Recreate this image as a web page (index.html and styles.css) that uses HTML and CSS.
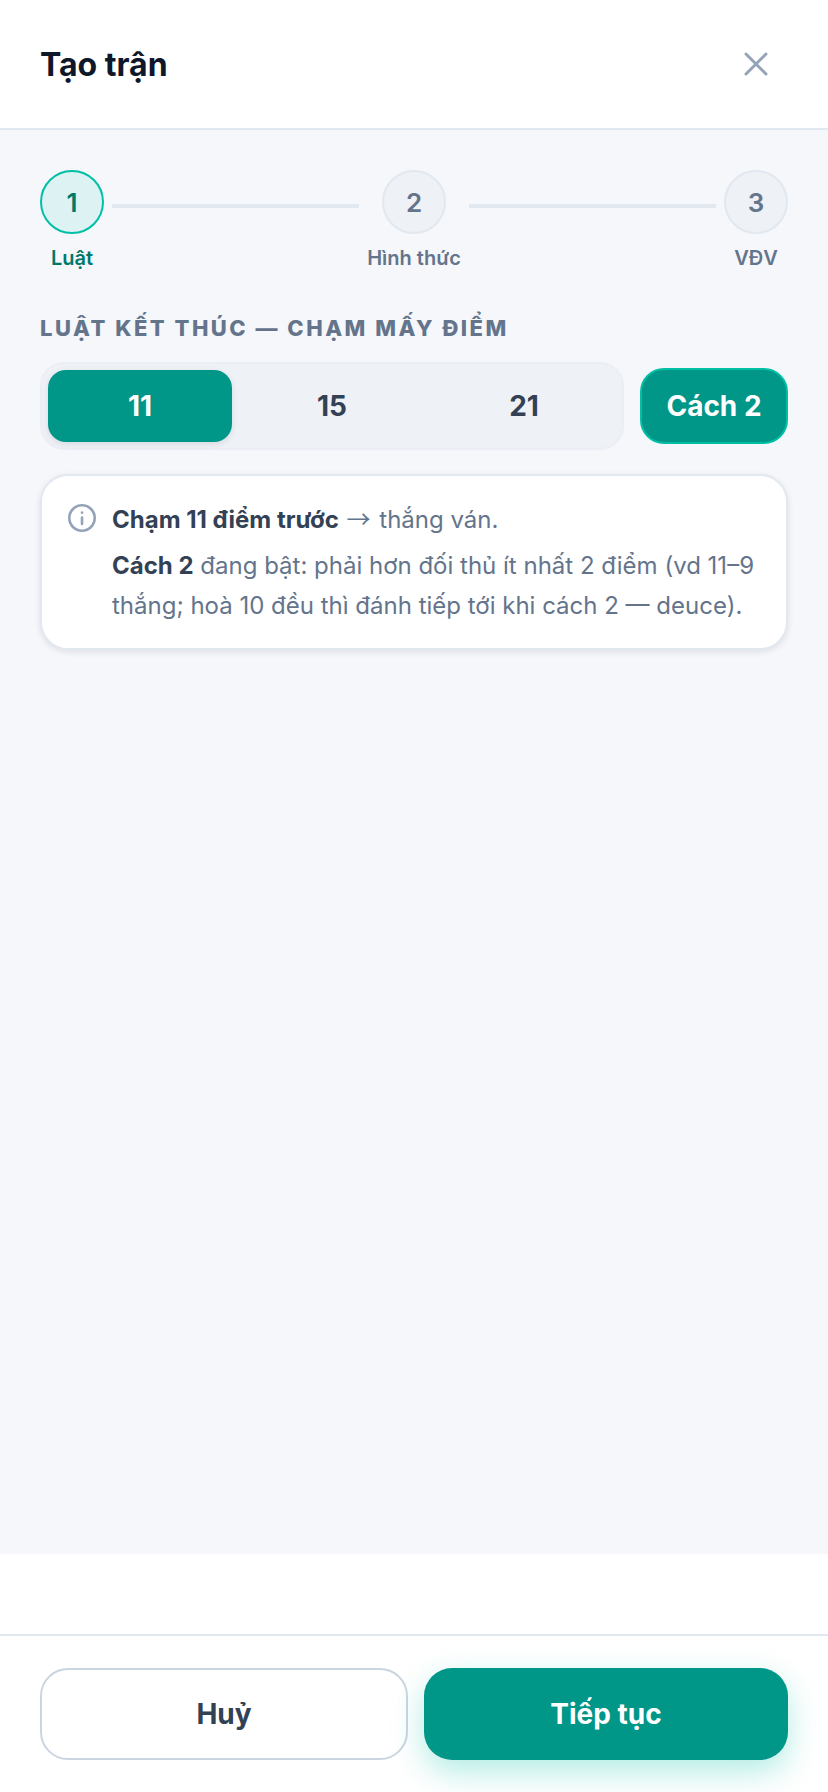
FILE: index.html
```html
<!DOCTYPE html>
<html lang="vi">
<head>
<meta charset="utf-8">
<title>Tạo trận</title>
<link rel="stylesheet" href="styles.css">
</head>
<body>
<div class="sheet">
  <header class="top">
    <h1 class="title">Tạo trận</h1>
    <button class="close" aria-label="Đóng">
      <svg width="48" height="48" viewBox="0 0 48 48" fill="none" stroke="#94a3b8" stroke-width="3" stroke-linecap="round"><path d="M14 14 34 34M34 14 14 34"/></svg>
    </button>
  </header>

  <main class="body">
    <ol class="steps">
      <li class="step step-active"><span class="dot">1</span><span class="step-name">Luật</span></li>
      <li class="link"></li>
      <li class="step"><span class="dot">2</span><span class="step-name">Hình thức</span></li>
      <li class="link"></li>
      <li class="step"><span class="dot">3</span><span class="step-name">VĐV</span></li>
    </ol>

    <h2 class="section">LUẬT KẾT THÚC — CHẠM MẤY ĐIỂM</h2>

    <div class="controls">
      <div class="segment">
        <button class="seg seg-on">11</button>
        <button class="seg">15</button>
        <button class="seg">21</button>
      </div>
      <button class="toggle">Cách 2</button>
    </div>

    <section class="note">
      <svg class="note-icon" width="32" height="32" viewBox="0 0 32 32" fill="none" stroke="#94a3b8" stroke-width="2.6" stroke-linecap="round"><circle cx="16" cy="16" r="12.7"/><path d="M16 15.5v6.5M16 10.6v.1"/></svg>
      <div class="note-text">
        <p class="note-lead"><b>Chạm 11 điểm trước</b> <span class="arrow">→</span> thắng ván.</p>
        <p class="note-more"><b>Cách 2</b> đang bật: phải hơn đối thủ ít nhất 2 điểm (vd 11–9 thắng; hoà 10 đều thì đánh tiếp tới khi cách 2 — deuce).</p>
      </div>
    </section>
  </main>

  <div class="spacer"></div>

  <footer class="actions">
    <button class="btn btn-ghost">Huỷ</button>
    <button class="btn btn-main">Tiếp tục</button>
  </footer>
</div>
</body>
</html>
```
FILE: styles.css
```css
* { box-sizing: border-box; }
html, body { margin: 0; height: 100%; }
body { font-family: Inter, "Noto Sans", sans-serif; background: #fff; color: #0f172a; }
button { font-family: inherit; cursor: pointer; }

.sheet { display: flex; flex-direction: column; height: 1792px; overflow: hidden; }

.top {
  flex: none; height: 130px; padding: 0 40px; display: flex; align-items: center;
  justify-content: space-between; border-bottom: 2px solid #e2e8f0; background: #fff;
}
.title { margin: 2px 0 0; font-size: 32px; font-weight: 700; line-height: 40px; color: #0f172a; }
.close { width: 48px; height: 48px; padding: 0; border: 0; background: none; margin-right: 8px; display: flex; }

.body { flex: 1; background: #f5f7fb; padding: 40px 40px 0; }

.steps { list-style: none; margin: 0; padding: 0; display: flex; align-items: flex-start; gap: 8px; }
.step { flex: none; min-width: 64px; display: flex; flex-direction: column; align-items: center; }
.dot {
  width: 64px; height: 64px; border-radius: 50%; border: 2px solid #e2e8f0; background: #eef1f6;
  display: flex; align-items: center; justify-content: center;
  font-size: 26px; font-weight: 600; color: #64748b;
}
.step-name { margin-top: 10px; font-size: 20px; line-height: 28px; font-weight: 600; color: #64748b; white-space: nowrap; }
.step-active .dot { border-color: #00bfa5; background: #ddf2f2; color: #00796b; }
.step-active .step-name { color: #00796b; }
.link { flex: 1; height: 4px; margin-top: 34px; background: #e2e8f0; }

.section { margin: 42px 0 20px; font-size: 22px; line-height: 28px; font-weight: 800; letter-spacing: 2.5px; color: #64748b; }

.controls { display: flex; align-items: center; gap: 16px; }
.segment {
  flex: 1; height: 88px; padding: 6px; border: 2px solid #ebeef4; border-radius: 24px;
  background: #eef1f6; display: flex; gap: 8px;
}
.seg {
  flex: 1; height: 72px; border: 0; border-radius: 18px; background: none;
  font-size: 28px; font-weight: 700; color: #334155;
}
.seg-on { background: #009688; color: #fff; box-shadow: 0 2px 6px rgba(15, 23, 42, .1); }
.toggle {
  flex: none; width: 148px; height: 76px; border: 2px solid #00bfa5; border-radius: 24px;
  background: #009688; color: #fff; font-size: 28px; font-weight: 700; padding: 0;
}

.note {
  margin-top: 24px; padding: 24px 30px 22px 24px; display: flex; gap: 14px; background: #fff;
  border: 2px solid #e2e8f0; border-radius: 28px; box-shadow: 0 2px 6px rgba(15, 23, 42, .1);
}
.note-icon { flex: none; margin-top: 2px; }
.note-text { flex: 1; font-size: 24px; line-height: 40px; color: #64748b; }
.note-text p { margin: 0; }
.note-text b { font-weight: 700; color: #334155; }
.arrow { font-family: "Noto Sans CJK SC", sans-serif; line-height: 0; margin: 0 2px 0 1px; }
.note-more { margin-top: 6px !important; }

.spacer { flex: none; height: 80px; background: #fff; }

.actions {
  flex: none; height: 158px; padding: 32px 40px 30px; border-top: 2px solid #e2e8f0; background: #fff;
  display: grid; grid-template-columns: 368fr 364fr; gap: 16px;
}
.btn { height: 92px; border-radius: 28px; font-size: 28px; font-weight: 700; padding: 0; }
.btn-ghost { border: 2px solid #cbd5e1; background: #fff; color: #334155; }
.btn-main { border: 0; background: #009688; color: #fff; box-shadow: 0 12px 32px rgba(0, 191, 165, .3); }
```
